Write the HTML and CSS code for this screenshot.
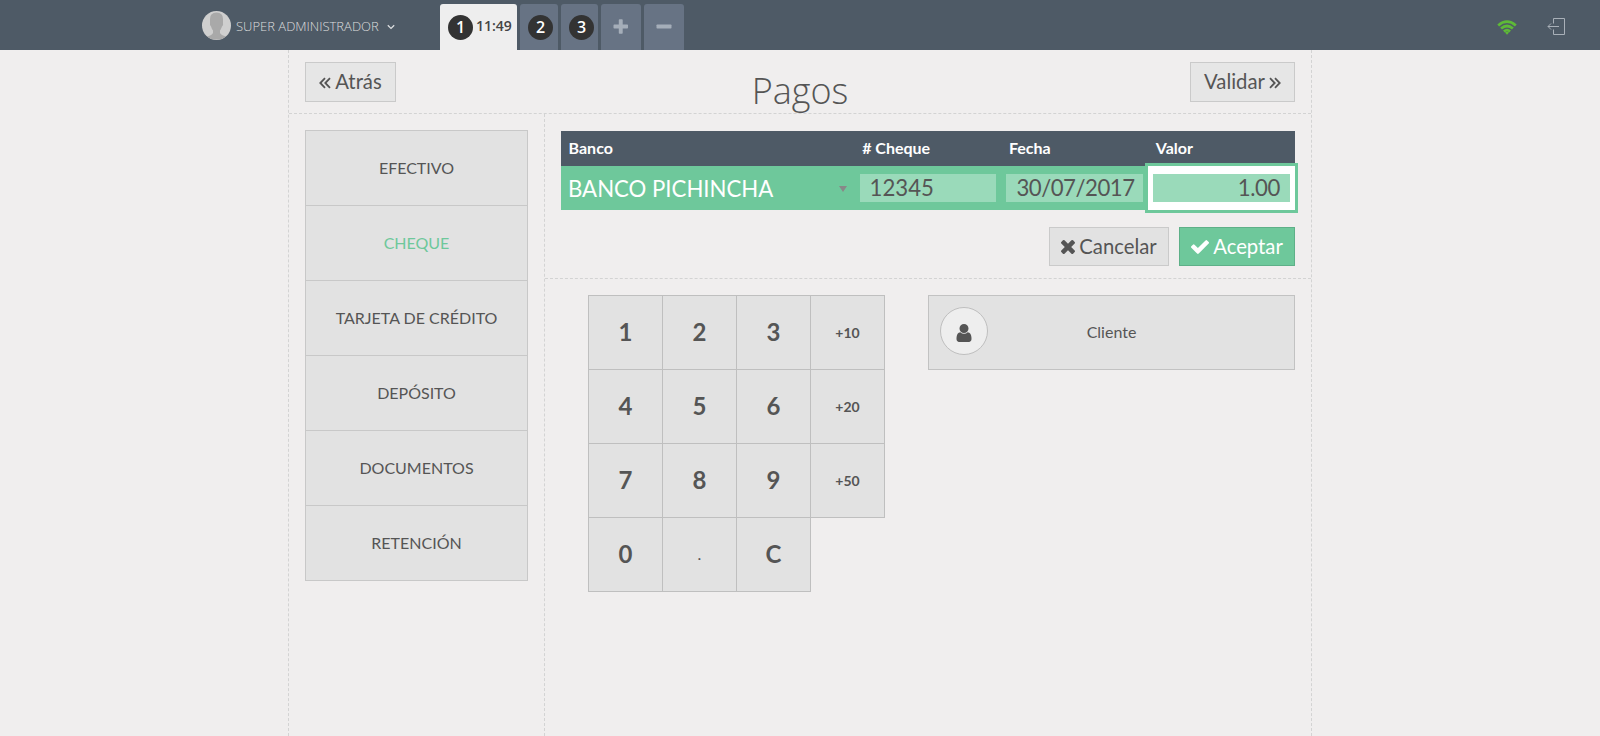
FILE: index.html
```html
<!DOCTYPE html>
<html lang="es">
<head>
<meta charset="utf-8">
<title>Pagos</title>
<link rel="stylesheet" href="styles.css">
</head>
<body>
<header class="topbar">
  <div class="user">
    <svg class="avatar" viewBox="0 0 29 29"><defs><clipPath id="c"><circle cx="14.500" cy="14.500" r="14.500"/></clipPath></defs><g clip-path="url(#c)"><rect width="29" height="29" fill="#cfcfcf"/><path fill="#a9a9a9" d="M8 8Q8 1.500 14.500 1.500T21 8v3q.6 3-1 4.500-.8 2.500-2 4v2.500q1 2 6 3.500l3 3H3l2.500-3q4.500-1.500 5.500-3.500v-2.500q-1.200-1.500-2-4Q7.500 14 8 11z"/></g></svg>
    <span class="username">SUPER ADMINISTRADOR</span>
    <svg class="chevron" viewBox="0 0 8 6"><path d="M.8 1.200 4 4.400 7.200 1.200" fill="none" stroke="#dcdee0" stroke-width="1.300"/></svg>
  </div>
  <nav class="orders">
    <div class="tab active"><span class="badge">1</span><span class="time">11:49</span></div>
    <div class="tab second"><span class="badge">2</span></div>
    <div class="tab third"><span class="badge">3</span></div>
    <div class="tab tool"><svg viewBox="0 0 16 16"><path fill="#a5aeb9" d="M5.800 1q0-.7.700-.7h2.500q.7 0 .7.700v4.600h4.600q.7 0 .7.700v2.500q0 .7-.7.700H9.700v4.600q0 .7-.7.700H6.500q-.7 0-.7-.7V9.500H1.200q-.7 0-.7-.7V6.300q0-.7.700-.7h4.600z"/></svg></div>
    <div class="tab tool"><svg viewBox="0 0 16 16"><rect x=".5" y="5.600" width="15" height="3.900" rx=".7" fill="#a5aeb9"/></svg></div>
  </nav>
  <div class="status">
    <svg class="wifi" viewBox="0 0 20 15"><g fill="none" stroke="#5eb937" stroke-width="2.700"><path d="M1.200 5.400Q10-2.200 18.800 5.400M4.100 8.600Q10 3.400 15.900 8.600M6.900 11.500Q10 8.900 13.100 11.500"/></g><path fill="#5eb937" d="M8 12.500q2-1.700 4 0l-2 2.200z"/></svg>
    <svg class="exit" viewBox="0 0 18 18"><path d="M6.500 5.500v-5h11v16h-11v-5M12 8.500H1M4 5.500 1 8.500l3 3" fill="none" stroke="#a9b0b8"/></svg>
  </div>
</header>
<main class="screen">
  <div class="titlebar">
    <button class="btn back"><svg class="angles" viewBox="0 0 12 12"><path d="M6 1.200 1.300 6 6 10.800M11 1.200 6.300 6l4.700 4.800"/></svg>Atrás</button>
    <h1>Pagos</h1>
    <button class="btn next">Validar<svg class="angles" viewBox="0 0 12 12"><path d="M1 1.200 5.700 6 1 10.800M6 1.200 10.700 6 6 10.800"/></svg></button>
  </div>
  <div class="body">
    <aside class="methods">
      <div class="method">EFECTIVO</div>
      <div class="method selected">CHEQUE</div>
      <div class="method">TARJETA DE CRÉDITO</div>
      <div class="method">DEPÓSITO</div>
      <div class="method">DOCUMENTOS</div>
      <div class="method">RETENCIÓN</div>
    </aside>
    <section class="content">
      <div class="payment">
        <div class="row head"><span>Banco</span><span># Cheque</span><span>Fecha</span><span>Valor</span></div>
        <div class="row line">
          <div class="bank"><span>BANCO PICHINCHA</span><i class="caret"></i></div>
          <div class="cell"><div class="field">12345</div></div>
          <div class="cell"><div class="field date">30/07/2017</div></div>
          <div class="cell focus"><div class="field amount">1.00</div></div>
        </div>
        <div class="actions">
          <button class="btn cancel"><svg class="fa x" viewBox="302 366 1188 1188"><path d="M1490 1322q0 40-28 68l-136 136q-28 28-68 28t-68-28l-294-294-294 294q-28 28-68 28t-68-28l-136-136q-28-28-28-68t28-68l294-294-294-294q-28-28-28-68t28-68l136-136q28-28 68-28t68 28l294 294 294-294q28-28 68-28t68 28l136 136q28 28 28 68t-28 68l-294 294 294 294q28 28 28 68z"/></svg>Cancelar</button>
          <button class="btn accept"><svg class="fa ok" viewBox="121 334 1550 1188"><path d="M1671 566q0 40-28 68l-724 724-136 136q-28 28-68 28t-68-28l-136-136-362-362q-28-28-28-68t28-68l136-136q28-28 68-28t68 28l294 295 656-657q28-28 68-28t68 28l136 136q28 28 28 68z"/></svg>Aceptar</button>
        </div>
      </div>
      <div class="lower">
        <div class="numpad">
          <b>1</b><b>2</b><b>3</b><b class="mode">+10</b>
          <b>4</b><b>5</b><b>6</b><b class="mode">+20</b>
          <b>7</b><b>8</b><b>9</b><b class="mode">+50</b>
          <b>0</b><b class="dot">.</b><b>C</b>
        </div>
        <div class="customer">
          <span class="round"><svg class="fa person" viewBox="256 128 1280 1536"><path d="M1536 1399q0 109-62.500 187t-150.500 78h-854q-88 0-150.500-78t-62.500-187q0-85 8.500-160.500t31.500-152 58.500-131 94-89 134.500-34.500q131 128 313 128t313-128q76 0 134.500 34.500t94 89 58.500 131 31.500 152 8.500 160.500zm-256-887q0 159-112.500 271.500t-271.500 112.500-271.500-112.500-112.500-271.500 112.500-271.500 271.500-112.500 271.500 112.500 112.500 271.500z"/></svg></span>
          <span class="client">Cliente</span>
        </div>
      </div>
    </section>
  </div>
</main>
</body>
</html>
```

FILE: styles.css
```css
* { box-sizing: border-box; }
body { margin: 0; height: 736px; overflow: hidden; background: #f0eeee; color: #555; font: 16px Lato, sans-serif; display: flex; flex-direction: column; }
svg { display: block; flex: none; }
.topbar { height: 50px; flex: none; background: #4e5a66; display: flex; font-family: "Open Sans", sans-serif; }
.user { width: 440px; padding-left: 202px; display: flex; align-items: center; }
.avatar { width: 29px; height: 29px; margin-top: 1px; }
.username { width: 143px; margin: 2px 8px 0 5px; color: #ddd; font-size: 13px; font-weight: 300; white-space: nowrap; }
.chevron { width: 8px; height: 6px; margin-top: 3px; }
.orders { display: flex; gap: 3px; padding-top: 4px; }
.tab { height: 46px; background: #677384; border-radius: 3px 3px 0 0; display: flex; align-items: center; padding-left: 8px; }
.tab.active { width: 77px; background: #eee; color: #444; }
.second { width: 38px; }
.third { width: 37px; }
.tool { width: 40px; padding: 0 0 0 12px; }
.tool svg { width: 16px; height: 16px; }
.badge { width: 25px; height: 25px; flex: none; border-radius: 50%; background: #333; color: #fff; font-size: 16px; font-weight: 600; line-height: 25px; text-align: center; }
.time { margin-left: 3px; font-size: 14px; font-weight: 600; line-height: 19px; margin-top: -3px; }
.status { margin-left: auto; padding-right: 35px; display: flex; gap: 30px; }
.wifi { width: 20px; height: 15px; margin-top: 20px; }
.exit { width: 18px; height: 18px; margin-top: 18px; }
.screen { width: 1024px; flex: 1; margin: 0 auto; border: dashed #d3d3d3; border-width: 0 1px; display: flex; flex-direction: column; }
.titlebar { height: 64px; border-bottom: 1px dashed #d3d3d3; padding: 12px 16px 0; display: flex; justify-content: space-between; }
h1 { margin: 4px 0 0 14px; font: 300 36px/50px "Open Sans", sans-serif; height: 47px; }
.btn { border: 1px solid #cacaca; background: #e6e6e6; color: #555; font: 20.3px Lato, sans-serif; display: flex; align-items: center; justify-content: center; height: 40px; padding: 0 0 2px; gap: 4px; white-space: nowrap; }
.back { width: 91px; }
.next { width: 105px; }
.angles { width: 12px; height: 12px; margin-top: 3px; fill: none; stroke: #555; stroke-width: 1.8; }
.body { display: flex; flex: 1; }
.methods { width: 256px; padding: 16px; border-right: 1px dashed #d3d3d3; }
.method { height: 75px; border: 1px solid #c8c8c8; border-bottom: 0; background: #e2e2e2; display: flex; align-items: center; justify-content: center; padding: 0 0 2px; }
.method:last-child { height: 76px; border-bottom: 1px solid #c8c8c8; }
.selected { color: #6ec89b; }
.content { flex: 1; }
.payment { height: 165px; border-bottom: 1px dashed #d3d3d3; padding: 17px 16px 0; }
.row { display: grid; grid-template-columns: minmax(0, 2fr) repeat(3, minmax(0, 1fr)); }
.head { height: 35px; align-items: center; background: #4e5a66; color: #fff; font-weight: 700; padding-bottom: 2px; }
.head span { padding-left: 7.6px; }
.line { height: 44px; background: #6ec89b; font-size: 22.2px; }
.bank { display: flex; align-items: center; justify-content: space-between; color: #fff; padding: 0 7px; }
.caret { border: solid transparent; border-width: 6px 4px 0; border-top-color: #888; margin-right: 1px; margin-top: 1px; }
.cell { padding: 8px 5px; }
.field { height: 28px; line-height: 28px; padding: 0 10px; background: #9adaba; white-space: nowrap; }
.date { letter-spacing: -.48px; }
.focus { background: #fff; box-shadow: 0 0 0 3px #6ec89b; }
.amount { text-align: right; letter-spacing: -.4px; }
.actions { display: flex; justify-content: flex-end; gap: 10px; margin-top: 17px; }
.actions .btn { height: 39px; }
.cancel { width: 120px; background: #e2e2e2; }
.btn.accept { width: 116px; background: #6ec89b; border-color: #5eb088; color: #fff; }
.fa { fill: currentColor; }
.x { width: 14px; height: 14px; margin-top: 3px; }
.ok { width: 18px; height: 14px; margin-top: 2px; }
.lower { display: flex; justify-content: space-between; padding: 16px 16px 0 43px; }
.numpad { display: grid; grid-template-columns: repeat(4, 74px); grid-auto-rows: 74px; width: 297px; }
.numpad b { width: 75px; height: 75px; border: 1px solid #bfbfbf; background: #e2e2e2; font-size: 24px; display: flex; align-items: center; justify-content: center; padding-bottom: 2px; }
.numpad .mode { font-size: 14px; padding-bottom: 0; }
.numpad .dot { font-size: 16px; font-weight: 400; }
.customer { width: 367px; height: 75px; border: 1px solid #c2c2c2; background: #e2e2e2; display: grid; grid-template-columns: 48px 1fr 48px; align-items: center; text-align: center; padding: 0 11px; }
.client { padding: 0 0 2px; }
.round { width: 48px; height: 48px; margin-top: -3px; border: 1px solid #bfbfbf; border-radius: 50%; background: #eee; display: flex; align-items: center; justify-content: center; }
.person { width: 16px; height: 18px; margin-top: 4px; }
```
